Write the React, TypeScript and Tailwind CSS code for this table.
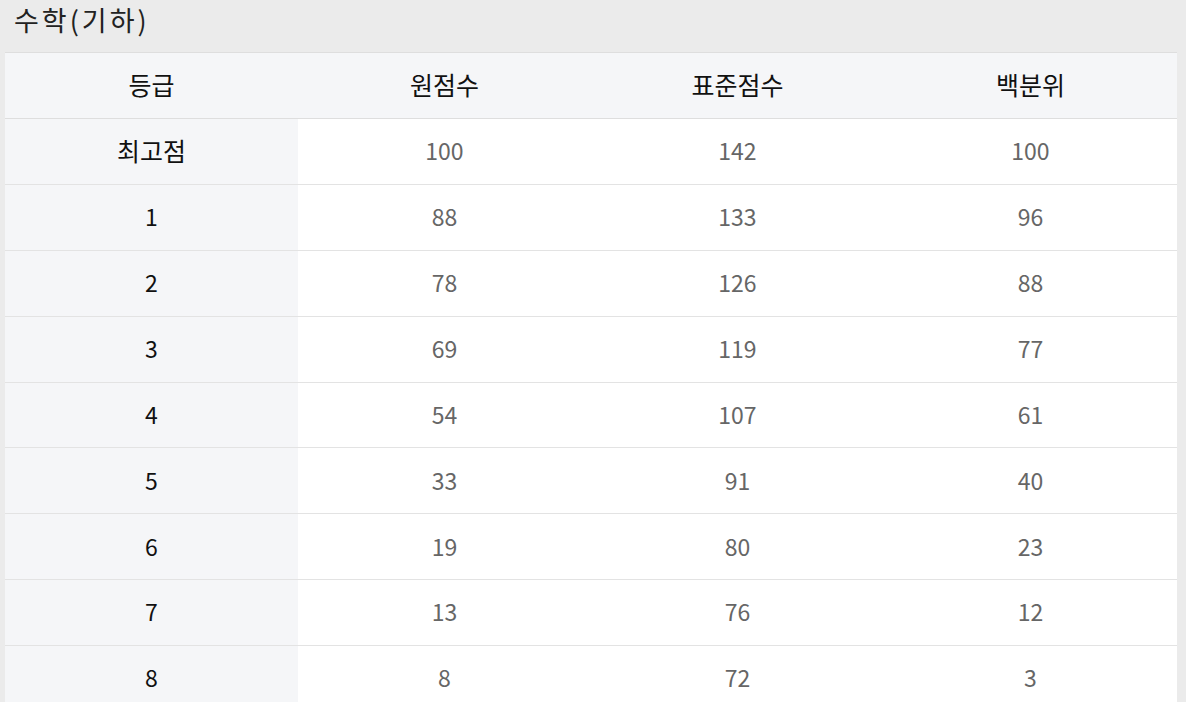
import React from 'react';

const ROWS: [string, string, string, string][] = [
  ['최고점', '100', '142', '100'],
  ['1', '88', '133', '96'],
  ['2', '78', '126', '88'],
  ['3', '69', '119', '77'],
  ['4', '54', '107', '61'],
  ['5', '33', '91', '40'],
  ['6', '19', '80', '23'],
  ['7', '13', '76', '12'],
  ['8', '8', '72', '3'],
];

const HEADERS = ['등급', '원점수', '표준점수', '백분위'];

const App: React.FC = () => {
  return (
    <div
      className="min-h-[702px] w-[1186px] bg-[#ebebeb] overflow-hidden"
      style={{ fontFamily: '"Noto Sans CJK KR", "Liberation Sans", sans-serif' }}
    >
      {/* Title */}
      <div className="h-[52px] pl-[14px] pt-[3px] text-[27px] leading-[34px] tracking-[3px] text-[#222]">수학(기하)</div>

      {/* Table */}
      <div className="ml-[5px] w-[1172px] border-t border-[#dedede]">
        <div className="grid grid-cols-4 h-[66px] bg-[#f5f6f8] border-b border-[#dedede]">
          {HEADERS.map(h => (
            <div key={h} className="flex items-center justify-center pb-[2px] text-[25px] text-[#111]">
              {h}
            </div>
          ))}
        </div>
        {ROWS.map((r, i) => (
          <div key={r[0]} className="grid grid-cols-4 h-[65.9px] bg-white border-b border-[#e3e3e3]">
            <div className={`flex items-center justify-center bg-[#f5f6f8] pb-[2px] text-[#111] ${i === 0 ? 'text-[25px]' : 'text-[23px]'}`}>{r[0]}</div>
            <div className="flex items-center justify-center pb-[2px] text-[23px] text-[#666]">{r[1]}</div>
            <div className="flex items-center justify-center pb-[2px] text-[23px] text-[#666]">{r[2]}</div>
            <div className="flex items-center justify-center pb-[2px] text-[23px] text-[#666]">{r[3]}</div>
          </div>
        ))}
      </div>
    </div>
  );
};

export default App;
